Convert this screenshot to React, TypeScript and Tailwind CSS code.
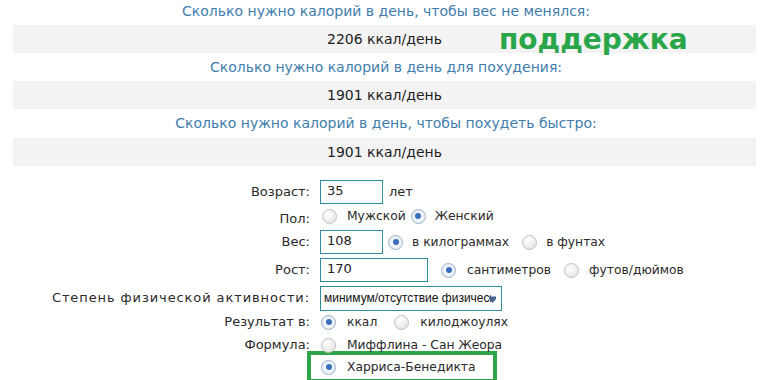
import React from "react";

const font = { fontFamily: "'DejaVu Sans', Verdana, sans-serif" };

const Radio: React.FC<{ checked?: boolean; className?: string }> = ({ checked, className }) => (
  <span
    className={`flex items-center justify-center w-[15px] h-[15px] rounded-full border shrink-0 ${className ?? ""} ${
      checked
        ? "border-[#9cb2c8] bg-[radial-gradient(circle,#ffffff_0%,#e6eef6_70%,#d3dde8_100%)]"
        : "border-[#c2c2c2] bg-[radial-gradient(circle_at_40%_35%,#ffffff_0%,#ececec_60%,#dcdcdc_100%)]"
    }`}
  >
    {checked && <span className="w-[6px] h-[6px] rounded-full bg-[#3a6fbf]" />}
  </span>
);

const Header: React.FC<{ children: React.ReactNode; className?: string }> = ({ children, className }) => (
  <div className={`h-[28px] flex items-center justify-center text-[14px] text-[#3f7dac] ${className ?? ""}`}>
    {children}
  </div>
);

const Band: React.FC<{ children: React.ReactNode }> = ({ children }) => (
  <div className="mx-[13px] w-[743px] h-[28px] bg-[#f3f3f3] flex items-center justify-center text-[14px] text-[#1e1e1e]">
    {children}
  </div>
);

const Row: React.FC<{ label: string; children: React.ReactNode; h: string; labelClass?: string }> = ({
  label,
  children,
  h,
  labelClass,
}) => (
  <div className={`flex items-center ${h}`}>
    <div className={`w-[310px] shrink-0 text-right text-[13px] text-[#2a2a2a] whitespace-nowrap ${labelClass ?? ""}`}>{label}</div>
    <div className="ml-[10px] flex items-center text-[12.3px] text-[#2a2a2a] whitespace-nowrap">{children}</div>
  </div>
);

const Input: React.FC<{ value: string; w: string }> = ({ value, w }) => (
  <div className={`${w} h-[24px] border border-[#2d8b9c] bg-white px-[6px] flex items-center text-[13px] text-[#222] leading-none pb-[3px]`}>
    {value}
  </div>
);

export default function App() {
  return (
    <div className="w-[772px] h-[380px] overflow-hidden bg-white relative" style={font}>
      <Header className="-mt-[3px]">Сколько нужно калорий в день, чтобы вес не менялся:</Header>
      <Band>2206 ккал/день</Band>
      <Header>Сколько нужно калорий в день для похудения:</Header>
      <Band>1901 ккал/день</Band>
      <Header className="h-[29px]">Сколько нужно калорий в день, чтобы похудеть быстро:</Header>
      <Band>1901 ккал/день</Band>

      <div
        className="absolute left-[499px] top-[26px] text-[28px] font-bold text-[#2aa64a] leading-none"
        style={{ fontFamily: "Verdana, 'DejaVu Sans', sans-serif" }}
      >
        поддержка
      </div>

      <div className="mt-[13px]">
        <Row label="Возраст:" h="h-[25px]">
          <Input value="35" w="w-[63px]" />
          <span className="ml-[6px] text-[13px]">лет</span>
        </Row>
        <Row label="Пол:" h="h-[24px]" labelClass="pt-[5px]">
          <Radio className="ml-[2px]" />
          <span className="ml-[10px]">Мужской</span>
          <Radio checked className="ml-[5px]" />
          <span className="ml-[9px]">Женский</span>
        </Row>
        <Row label="Вес:" h="h-[28px]">
          <Input value="108" w="w-[63px]" />
          <Radio checked className="ml-[5px]" />
          <span className="ml-[9px]">в килограммах</span>
          <Radio className="ml-[13px]" />
          <span className="ml-[9px]">в фунтах</span>
        </Row>
        <Row label="Рост:" h="h-[28px]">
          <Input value="170" w="w-[108px]" />
          <Radio checked className="ml-[13px]" />
          <span className="ml-[11px]">сантиметров</span>
          <Radio className="ml-[13px]" />
          <span className="ml-[10px]">футов/дюймов</span>
        </Row>
        <Row label="Степень физической активности:" h="h-[28px]" labelClass="tracking-[0.9px]">
          <div
            className="relative w-[182px] h-[25px] border border-[#2d8b9c] bg-white flex items-center pl-[3px] overflow-hidden text-[12px] text-[#111] whitespace-nowrap"
            style={{ fontFamily: "'Liberation Sans', Arial, sans-serif" }}
          >
            минимум/отсутствие физической
            <span className="absolute right-0 top-0 bottom-0 w-[10px] bg-white" />
            <svg className="absolute right-[4px] top-[8px]" width="9" height="9" viewBox="0 0 9 9">
              <path d="M1 1.5 H8 V4 L4.5 8 L1 4 Z" fill="#4a6590" />
            </svg>
          </div>
        </Row>
        <Row label="Результат в:" h="h-[20px]">
          <Radio checked className="ml-[1px]" />
          <span className="ml-[11px]">ккал</span>
          <Radio className="ml-[17px]" />
          <span className="ml-[11px]">килоджоулях</span>
        </Row>
        <Row label="Формула:" h="h-[26px]">
          <Radio className="ml-[1px]" />
          <span className="ml-[11px]">Миффлина - Сан Жеора</span>
        </Row>
        <div className="-mt-[7px] ml-[307px] w-[190px] h-[32px] border-[4px] border-[#2ea54b] flex items-center">
          <Radio checked className="ml-[10px]" />
          <span className="ml-[11px] text-[12.3px] text-[#2a2a2a]">Харриса-Бенедикта</span>
        </div>
      </div>
    </div>
  );
}
